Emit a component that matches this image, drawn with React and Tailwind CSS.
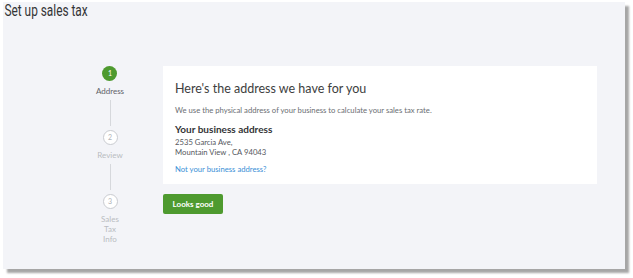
import React from 'react';

const Step = ({ n, label, active }) => (
  <div className="flex flex-col items-center">
    <div
      className={
        active
          ? 'w-[15px] h-[15px] rounded-full bg-[#4e9a2f] text-white text-[7px] flex items-center justify-center'
          : 'w-[15px] h-[15px] rounded-full border border-[#c9cbd0] bg-white text-[#b0b3b8] text-[7px] flex items-center justify-center'
      }
    >
      {n}
    </div>
    <div
      className={
        'mt-[5px] text-[8px] leading-[10px] text-center whitespace-nowrap ' +
        (active ? 'text-[#5f6268]' : 'text-[#b9bcc1]')
      }
    >
      {label}
    </div>
  </div>
);

const Connector = () => <div className="w-px h-[26px] bg-[#d6d8dc] my-[4px]" />;

export default function App() {
  return (
    <div className="w-[633px] h-[278px] bg-white relative" style={{ fontFamily: 'Lato, "Open Sans", sans-serif' }}>
      <div className="absolute left-[3px] top-[2px] w-[622px] h-[267px] bg-[#f3f4f8] shadow-[4px_4px_2px_rgba(0,0,0,0.35)]">
        <h1
          className="pl-[2px] text-[16px] leading-[18px] font-normal text-[#333436] origin-left scale-x-[0.74] whitespace-nowrap"
          style={{ fontFamily: 'Roboto, "Liberation Sans", sans-serif' }}
        >
          Set up sales tax
        </h1>
        <div className="flex mt-[46px]">
          <div className="w-[160px] shrink-0">
            <div className="ml-[92px] w-[30px] flex flex-col items-center">
              <Step n="1" label="Address" active />
              <Connector />
              <Step n="2" label="Review" />
              <Connector />
              <Step n="3" label={<>Sales<br />Tax<br />Info</>} />
            </div>
          </div>
          <div className="flex flex-col items-start">
            <div className="w-[434px] h-[118px] bg-white pl-[12px] pt-[15px]">
              <div className="text-[12.5px] leading-[16px] text-[#3d3e40]">Here's the address we have for you</div>
              <div className="mt-[8px] text-[7.7px] leading-[10px] text-[#6b6e73]">
                We use the physical address of your business to calculate your sales tax rate.
              </div>
              <div className="mt-[8px] text-[10px] leading-[13px] text-[#333436] font-bold">Your business address</div>
              <div className="text-[7.7px] leading-[10px] text-[#55585d] mt-[1px]">2535 Garcia Ave,</div>
              <div className="text-[7.7px] leading-[10px] text-[#55585d]">Mountain View , CA 94043</div>
              <div className="mt-[7px] text-[7.7px] leading-[10px] text-[#3b8fd6]">Not your business address?</div>
            </div>
            <button className="mt-[10px] w-[60px] h-[20px] rounded-[2px] bg-[#4e9a2f] text-white text-[8px] font-bold">
              Looks good
            </button>
          </div>
        </div>
      </div>
    </div>
  );
}
